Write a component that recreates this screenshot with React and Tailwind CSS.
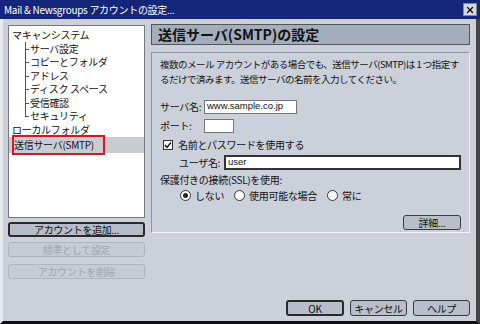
import { X } from 'lucide-react'

const jp = { fontFamily: '"Noto Sans CJK JP", "DejaVu Sans", sans-serif' }

function TreeItem({ label, last }) {
  return (
    <div className="relative h-[13.5px] whitespace-nowrap pl-[21px] leading-[13.5px]">
      <span className={`absolute left-[16px] top-0 w-px bg-[#555] ${last ? 'h-[7px]' : 'h-full'}`} />
      <span className="absolute left-[16px] top-[7px] h-px w-[4px] bg-[#555]" />
      {label}
    </div>
  )
}

function Btn({ children, className = '', disabled, strong }) {
  return (
    <div
      className={`flex items-center justify-center whitespace-nowrap rounded-[3px] text-[10px] ${
        disabled
          ? 'border border-[#aeb4c0] bg-[#c6cbd5] text-[#a0a6b2]'
          : strong
          ? 'border-2 border-[#2a2a2a] bg-[#b6bdc9] text-[#111]'
          : 'border border-[#3a3a3a] bg-[#b8bfcb] text-[#111]'
      } ${className}`}
    >
      {children}
    </div>
  )
}

function Radio({ checked, label }) {
  return (
    <div className="flex items-center gap-[4px]">
      <span className="flex h-[11px] w-[11px] items-center justify-center rounded-full border border-[#333] bg-white">
        {checked && <span className="h-[5px] w-[5px] rounded-full bg-[#222]" />}
      </span>
      <span>{label}</span>
    </div>
  )
}

export default function App() {
  const children = ['サーバ設定', 'コピーとフォルダ', 'アドレス', 'ディスク スペース', '受信確認', 'セキュリティ']
  return (
    <div className="flex h-[324px] w-[480px] flex-col overflow-hidden bg-[#cbd0da] text-[10px] tracking-[-0.3px] text-[#111]" style={jp}>
      {/* Title bar */}
      <div className="flex h-[19px] items-center justify-between bg-[#14267a] pl-[4px] pr-[3px] text-white">
        <span className="text-[10px]">Mail &amp; Newsgroups アカウントの設定...</span>
        <span className="flex h-[13px] w-[14px] items-center justify-center border border-[#888] bg-[#d4d8e0] text-black">
          <X size={10} strokeWidth={3} />
        </span>
      </div>

      <div className="flex min-h-0 flex-1 border-b-[3px] border-l-[3px] border-r-[4px] border-b-[#111] border-l-[#e8ebf0] border-r-[#444]">
        {/* Left column */}
        <div className="flex w-[148px] shrink-0 flex-col pl-[5px] pt-[6px]">
          <div className="h-[193px] w-[137px] border border-[#777] bg-white pt-[2px]">
            <div className="h-[13.5px] pl-[3px] leading-[13.5px]">マキャンシステム</div>
            {children.map((c, i) => (
              <TreeItem key={c} label={c} last={i === children.length - 1} />
            ))}
            <div className="h-[13.5px] pl-[3px] leading-[13.5px]">ローカルフォルダ</div>
            <div className="relative mt-[1px] h-[16px] whitespace-nowrap bg-[#c9ccd3] pl-[5px] leading-[16px]">
              <span className="absolute left-[3px] top-[-2px] h-[20px] w-[93px] border-2 border-[#e0141e]" />
              送信サーバ(SMTP)
            </div>
          </div>
          <Btn strong className="mt-[4px] h-[15px] w-[137px]">アカウントを追加...</Btn>
          <Btn disabled className="mt-[5px] h-[15px] w-[137px]">標準として設定</Btn>
          <Btn disabled className="mt-[7px] h-[15px] w-[137px]">アカウントを削除</Btn>
        </div>

        {/* Right column */}
        <div className="flex min-w-0 flex-1 flex-col overflow-hidden pr-[6px] pt-[5px]">
          <div className="flex h-[21px] items-center border border-[#555] bg-[#a4adbb] pl-[6px] text-[14px] font-bold tracking-normal text-[#111]">
            送信サーバ(SMTP)の設定
          </div>
          <div className="mt-[7px] h-[181px] border border-[#8d94a0] border-b-[#f4f5f8] border-r-[#f4f5f8] px-[8px] pt-[4px]">
            <p className="whitespace-nowrap text-[9.5px] leading-[15px] tracking-[-0.5px]">
              複数のメール アカウントがある場合でも、送信サーバ(SMTP)は 1 つ指定す
              <br />
              るだけで済みます。送信サーバの名前を入力してください。
            </p>
            <div className="mt-[12px] flex items-center">
              <span className="w-[44px] whitespace-nowrap">サーバ名:</span>
              <span className="flex h-[14px] w-[93px] items-center border border-[#777] bg-white pl-[2px] text-[9.5px] tracking-normal" style={{ fontFamily: '"Liberation Sans", sans-serif' }}>
                www.sample.co.jp
              </span>
            </div>
            <div className="mt-[4px] flex items-center">
              <span className="w-[44px] whitespace-nowrap">ポート:</span>
              <span className="h-[14px] w-[30px] border border-[#777] bg-white" />
            </div>
            <div className="mt-[4px] flex items-center gap-[5px] pl-[3px]">
              <span className="flex h-[10px] w-[10px] items-center justify-center border border-[#333] bg-white">
                <svg width="8" height="8" viewBox="0 0 8 8">
                  <path d="M1 4 L3 6.5 L7 1.5" fill="none" stroke="#111" strokeWidth="1.4" />
                </svg>
              </span>
              <span className="whitespace-nowrap">名前とパスワードを使用する</span>
            </div>
            <div className="mt-[3px] flex items-center pl-[19px]">
              <span className="w-[45px] whitespace-nowrap">ユーザ名:</span>
              <span className="flex h-[15px] flex-1 items-center border-2 border-[#333] bg-white pl-[2px] text-[9.5px] tracking-normal" style={{ fontFamily: '"Liberation Sans", sans-serif' }}>
                user
              </span>
            </div>
            <div className="mt-[2px] whitespace-nowrap">保護付きの接続(SSL)を使用:</div>
            <div className="mt-[1px] flex items-center gap-[10px] whitespace-nowrap pl-[20px]">
              <Radio checked label="しない" />
              <Radio label="使用可能な場合" />
              <Radio label="常に" />
            </div>
            <div className="mt-[12px] flex justify-end">
              <Btn className="h-[15px] w-[58px]">詳細...</Btn>
            </div>
          </div>
          <div className="mb-[5px] mt-auto flex justify-end gap-[6px]">
            <Btn strong className="h-[16px] w-[58px]">OK</Btn>
            <Btn className="h-[16px] w-[57px]">キャンセル</Btn>
            <Btn className="h-[16px] w-[57px]">ヘルプ</Btn>
          </div>
        </div>
      </div>
    </div>
  )
}
